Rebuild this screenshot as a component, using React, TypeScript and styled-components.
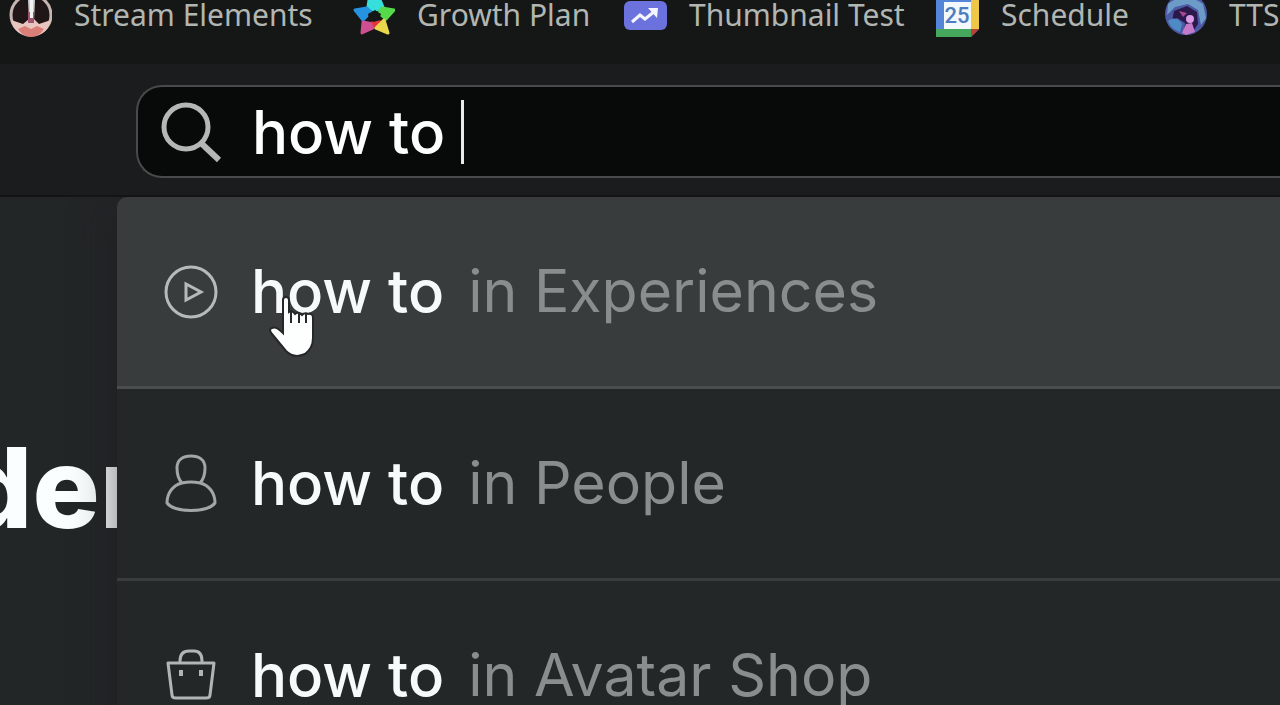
import React, { useState } from "react";
import styled, { createGlobalStyle } from "styled-components";

const GlobalStyle = createGlobalStyle`
  *, *::before, *::after { box-sizing: border-box; }
  html, body { margin: 0; background: #232627; }
  body { font-family: Inter, "Liberation Sans", sans-serif; }
`;

const Page = styled.div`
  display: flex;
  flex-direction: column;
  height: 100vh;
  overflow: hidden;
`;

const BookmarkBar = styled.nav`
  display: flex;
  flex: none;
  height: 64px;
  padding-left: 8px;
  overflow: hidden;
  background: #151716;
`;

const Bookmark = styled.a`
  display: flex;
  flex: none;
  align-items: flex-start;
  gap: 22px;
  color: #b2b6b2;
  text-decoration: none;

  svg {
    flex: none;
    width: 44px;
    height: 40px;
  }
`;

const BookmarkLabel = styled.span<{ $width: number }>`
  width: ${(p) => p.$width}px;
  font: 400 30px/30px "Noto Sans", "Open Sans", sans-serif;
  white-space: nowrap;
`;

const Header = styled.header`
  flex: none;
  padding: 21px 0 17px 136px;
  background: #1a1c1e;
  border-bottom: 2px solid #131416;
  overflow: hidden;
`;

const SearchBox = styled.label`
  display: flex;
  align-items: center;
  height: 93px;
  padding-left: 22px;
  border: 2px solid #484b4b;
  border-right: 0;
  border-radius: 26px 0 0 26px;
  background: #080a09;

  svg {
    flex: none;
    width: 64px;
    height: 64px;
    margin-right: 28px;
  }
`;

const SearchInput = styled.input`
  field-sizing: content;
  padding: 0;
  border: 0;
  outline: 0;
  background: transparent;
  color: #fbfffe;
  caret-color: transparent;
  font: 500 60px/64px Inter, sans-serif;
`;

const Caret = styled.span`
  width: 3px;
  height: 64px;
  background: #e8eaea;
`;

const Content = styled.main`
  position: relative;
  flex: 1;
  overflow: hidden;
  background: #232627;
`;

const Greeting = styled.h1`
  margin: 226px 0 0 -39px;
  color: #fbfefe;
  font: 800 112px/128px Inter, sans-serif;
`;

const Suggestions = styled.ul`
  position: absolute;
  top: 0;
  left: 117px;
  right: 0;
  margin: 0;
  padding: 0;
  list-style: none;
  background: #232728;
  border-top-left-radius: 10px;
  box-shadow: 0 0 44px rgba(28, 26, 30, 0.6);
`;

const SuggestionRow = styled.li`
  position: relative;
`;

const Suggestion = styled.button<{ $active?: boolean }>`
  display: flex;
  align-items: center;
  width: 100%;
  height: 192px;
  padding: 0 0 2px 44px;
  border: 0;
  border-bottom: 3px solid ${(p) => (p.$active ? "#4b4e4f" : "#3a3d3e")};
  border-top-left-radius: ${(p) => (p.$active ? 10 : 0)}px;
  background: ${(p) => (p.$active ? "#393c3d" : "#232728")};
  color: #f6fafa;
  font: 500 60px/64px Inter, sans-serif;
  text-align: left;
  white-space: nowrap;

  svg {
    flex: none;
    width: 60px;
    height: 60px;
    margin-right: 30px;
  }
`;

const Scope = styled.span`
  margin-left: 24px;
  color: #8a8d8e;
  font-size: 59px;
  font-weight: 400;
`;

const Pointer = styled.svg`
  position: absolute;
  top: 97px;
  left: 150px;
  width: 50px;
  height: 64px;
  pointer-events: none;
`;

const StreamIcon = () => (
  <svg viewBox="0 0 44 40" aria-hidden="true">
    <circle cx="23" cy="15" r="20" fill="#201617" stroke="#c5b5b0" strokeWidth="3" />
    <path d="M3 20L15 24L21 19L26 19L31 24L43 20Q39 36 23 36Q7 36 3 20Z" fill="#e9c5bf" />
    <path d="M10 29L17 26L23 29L29 26L36 29Q31 37 23 37Q15 37 10 29Z" fill="#d97f78" />
    <path d="M16 0H30V5H16Z" fill="#151716" />
    <path d="M20 0H27L26 21H21Z" fill="#d2c9cb" />
    <path d="M20 12H26V23H20Z" fill="#a05670" />
    <path d="M22 0H25V18H22Z" fill="#eff3f2" />
  </svg>
);

const StarIcon = () => (
  <svg viewBox="0 0 44 40" aria-hidden="true" strokeLinejoin="round" strokeWidth="3">
    <path d="M18 0H29L32 7L24 11L17 7Z" fill="#36dfdc" stroke="#36dfdc" />
    <path d="M4 10L16 8L20 12L12 20Z" fill="#2593df" stroke="#2593df" />
    <path d="M31 8L43 10L35 19L28 13Z" fill="#55da4b" stroke="#55da4b" />
    <path d="M12 22L22 24L22 28L11 33Z" fill="#cf4f93" stroke="#cf4f93" />
    <path d="M22 22L31 22L25 28Z" fill="#e3343a" stroke="#e3343a" />
    <path d="M33 20L37 33L25 28Z" fill="#ead84c" stroke="#ead84c" />
    <path d="M24 10L30 14L28 20L23 22L18 20L17 14Z" fill="#151716" />
  </svg>
);

const TrendIcon = () => (
  <svg viewBox="0 0 44 40" aria-hidden="true">
    <rect x="1" y="1" width="43" height="29" rx="6" fill="#6b72dd" />
    <path d="M9 22L17 15L22 19L32 11" fill="none" stroke="#f4f5ff" strokeWidth="3" />
    <path d="M25 8L35 8L34 18Z" fill="#f4f5ff" />
  </svg>
);

const CalendarIcon = () => (
  <svg viewBox="0 0 44 40" aria-hidden="true">
    <path d="M1 0H44V29L36 37H1Z" fill="#5585d8" />
    <path d="M36 0H44V29H36Z" fill="#edc747" />
    <path d="M1 29H36V37H1Z" fill="#45a75b" />
    <path d="M36 29H44L36 37Z" fill="#b94136" />
    <path d="M9 2H36V29H9Z" fill="#f2f8fb" />
    <text x="22" y="23" textAnchor="middle" fontFamily="Roboto, sans-serif" fontSize="22" fontWeight="500" fill="#4c7dbe">25</text>
  </svg>
);

const AvatarIcon = () => (
  <svg viewBox="0 0 44 40" aria-hidden="true">
    <circle cx="23" cy="14" r="21" fill="#4c5aa6" />
    <path d="M5 4Q22 -9 40 4L43 18L38 25L35 10L25 4L12 7L4 15Z" fill="#6c9bc7" />
    <path d="M11 11L24 6L34 12L35 24L29 33L21 34L22 23L14 18L9 21Z" fill="#2b194c" />
    <path d="M5 21Q13 15 19 24L17 32Q8 29 5 21Z" fill="#4e8bc5" />
    <circle cx="27" cy="19" r="4" fill="#d99be6" />
    <path d="M23 24L29 23L32 32L23 35L19 33Z" fill="#c37ac8" />
    <path d="M16 11L24 13L20 17Z" fill="#a6488f" />
  </svg>
);

const SearchIcon = () => (
  <svg viewBox="0 0 64 64" fill="none" stroke="#b5b6b6" strokeWidth="5" aria-hidden="true">
    <circle cx="26" cy="27" r="22" />
    <path d="M41 43L59 60" strokeWidth="6" />
  </svg>
);

const PlayIcon = () => (
  <svg viewBox="0 0 60 60" fill="none" stroke="#b7baba" strokeWidth="3" aria-hidden="true">
    <circle cx="30" cy="31" r="25" />
    <path d="M25 23V39L40 31Z" />
  </svg>
);

const PersonIcon = () => (
  <svg viewBox="0 0 60 60" fill="none" stroke="#a3a6a6" strokeWidth="3" strokeLinejoin="round" aria-hidden="true">
    <path d="M21 30C17 26 16 21 16 15C16 7 22 3 30 3C38 3 44 7 44 15C44 21 43 26 39 30" />
    <path d="M21 30C26 29 34 29 39 30C48 32 54 40 54 50C46 60 14 60 6 50C6 40 12 32 21 30Z" />
  </svg>
);

const BagIcon = () => (
  <svg viewBox="0 0 60 60" fill="none" stroke="#b2b5b5" strokeWidth="3" strokeLinejoin="round" aria-hidden="true">
    <path d="M7 18H53L49 50Q49 53 45 53H15Q11 53 11 50Z" />
    <path d="M19 18V16Q19 6 28 6H33Q41 6 41 16V18" />
    <path d="M20 25V31M40 25V31" strokeWidth="4" />
  </svg>
);

const bookmarks = [
  { label: "Stream Elements", width: 277, Icon: StreamIcon },
  { label: "Growth Plan", width: 206, Icon: StarIcon },
  { label: "Thumbnail Test", width: 246, Icon: TrendIcon },
  { label: "Schedule", width: 162, Icon: CalendarIcon },
  { label: "TTS", width: 80, Icon: AvatarIcon },
];

const scopes = [
  { name: "Experiences", Icon: PlayIcon },
  { name: "People", Icon: PersonIcon },
  { name: "Avatar Shop", Icon: BagIcon },
];

export default function App() {
  const [query, setQuery] = useState("how to ");

  return (
    <Page>
      <GlobalStyle />
      <BookmarkBar aria-label="Bookmarks">
        {bookmarks.map(({ label, width, Icon }) => (
          <Bookmark href="#" key={label}>
            <Icon />
            <BookmarkLabel $width={width}>{label}</BookmarkLabel>
          </Bookmark>
        ))}
      </BookmarkBar>
      <Header>
        <SearchBox>
          <SearchIcon />
          <SearchInput
            type="text"
            aria-label="Search"
            value={query}
            onChange={(e) => setQuery(e.target.value)}
          />
          <Caret />
        </SearchBox>
      </Header>
      <Content>
        <Greeting>der</Greeting>
        <Suggestions>
          {scopes.map(({ name, Icon }, i) => (
            <SuggestionRow key={name}>
              <Suggestion type="button" $active={i === 0}>
                <Icon />
                {query.trim()}
                <Scope>in {name}</Scope>
              </Suggestion>
              {i === 0 && (
                <Pointer viewBox="0 0 50 64" aria-hidden="true">
                  <path
                    d="M16 6Q16 3 19 3Q22 3 22 6V18Q25 16 28 20Q31 17 35 21Q38 18 41 20Q46 19 46 24V44Q46 54 38 60Q27 65 19 57L5 40Q1 35 5 34Q9 32 16 39Z"
                    fill="#fdffff"
                    stroke="#252829"
                    strokeWidth="2"
                  />
                  <path d="M24 17V29M32 19V29M39 19V29" fill="none" stroke="#252829" strokeWidth="2" />
                </Pointer>
              )}
            </SuggestionRow>
          ))}
        </Suggestions>
      </Content>
    </Page>
  );
}
